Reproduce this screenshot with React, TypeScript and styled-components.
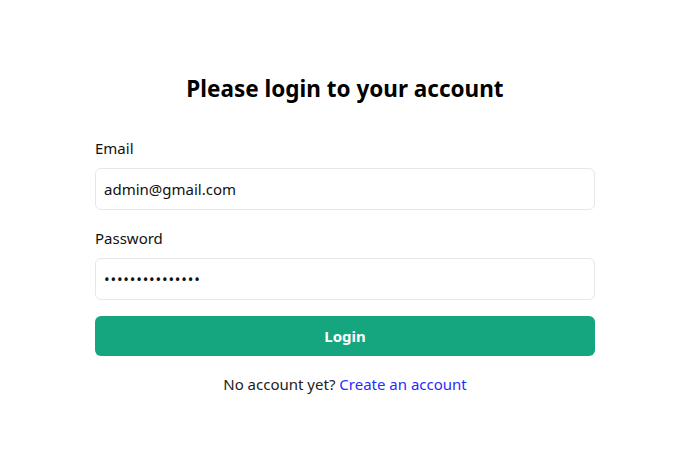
import React from "react";
import styled, { createGlobalStyle } from "styled-components";

const Global = createGlobalStyle`
  body { margin: 0; background: #fff; font-family: "Noto Sans", "Open Sans", sans-serif; color: #111; }
  * { box-sizing: border-box; }
`;

const Page = styled.div`
  display: flex;
  justify-content: center;
  padding: 72px 10px 0 0;
  width: 700px;
`;

const Form = styled.form`
  width: 500px;
  display: flex;
  flex-direction: column;
`;

const Title = styled.h1`
  margin: 0 0 31px;
  text-align: center;
  font-size: 22.5px;
  font-weight: 700;
  line-height: 34px;
  color: #000;
`;

const Field = styled.div<{ $after: number }>`
  display: flex;
  flex-direction: column;
  gap: 9px;
  margin-bottom: ${(p) => p.$after}px;
`;

const Label = styled.label`
  font-size: 15px;
  line-height: 22px;
  color: #111;
`;

const Input = styled.input<{ $secret?: boolean }>`
  height: 42px;
  border: 1px solid #e5e7eb;
  border-radius: 6px;
  padding: 0 8px;
  font-family: inherit;
  font-size: 15px;
  letter-spacing: ${(p) => (p.$secret ? "0.8px" : "normal")};
  color: #111;
  caret-color: #000;
  outline: none;
  background: #fff;
`;

const Button = styled.button`
  height: 40px;
  border: none;
  border-radius: 6px;
  background: #15a57f;
  color: #fff;
  font-family: inherit;
  font-size: 15px;
  font-weight: 700;
`;

const Footer = styled.p`
  margin: 17px 0 0;
  text-align: center;
  font-size: 15px;
  line-height: 22px;
  color: #222;
`;

const Link = styled.a`
  color: #2a2aff;
  text-decoration: none;
`;

export default function App() {
  return (
    <>
      <Global />
      <Page>
        <Form onSubmit={(e) => e.preventDefault()}>
          <Title>Please login to your account</Title>
          <Field $after={17}>
            <Label>Email</Label>
            <Input type="email" defaultValue="admin@gmail.com" />
          </Field>
          <Field $after={16}>
            <Label>Password</Label>
            <Input type="password" $secret autoFocus defaultValue="123456789012345" />
          </Field>
          <Button type="submit">Login</Button>
          <Footer>
            No account yet? <Link href="#">Create an account</Link>
          </Footer>
        </Form>
      </Page>
    </>
  );
}
